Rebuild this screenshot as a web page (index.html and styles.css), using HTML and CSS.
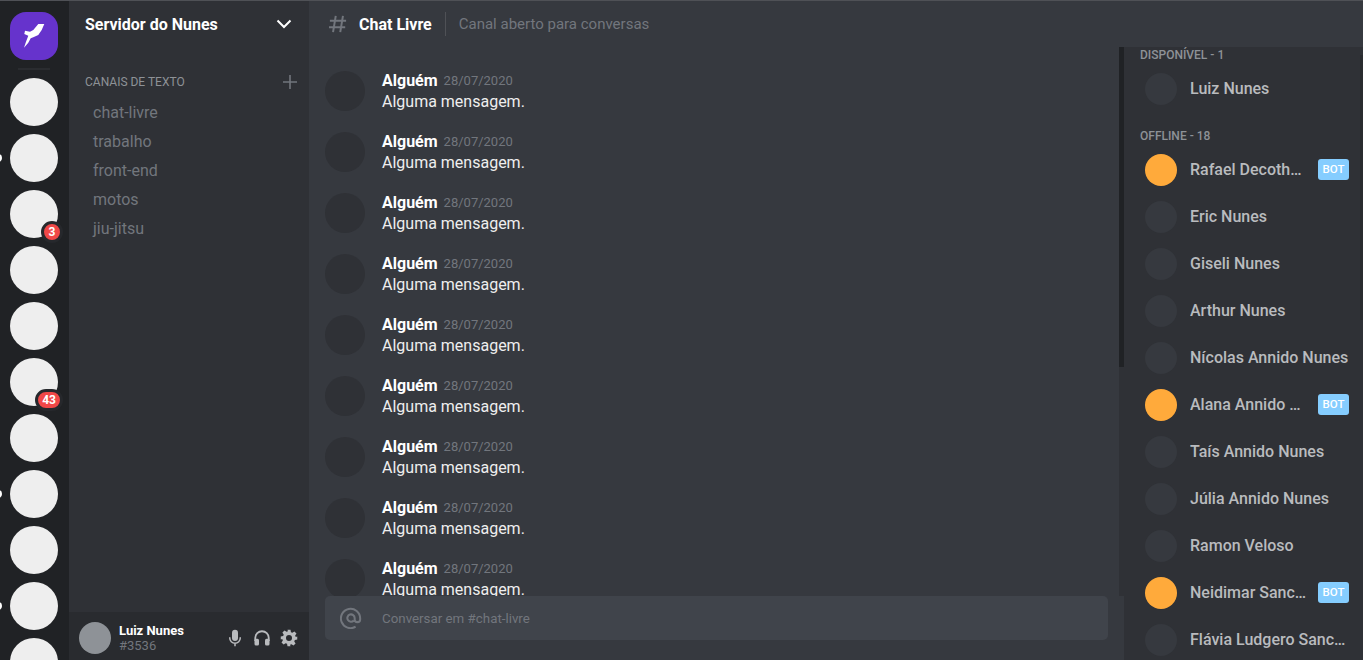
FILE: index.html
```html
<!DOCTYPE html>
<html lang="pt-BR">
<head>
    <meta charset="UTF-8">
    <title>Servidor do Nunes</title>
    <link rel="stylesheet" href="styles.css">
</head>
<body>
<div class="app">
    <!-- lista de servidores -->
    <nav class="servers">
        <div class="logo">
            <svg width="48" height="48" viewBox="0 0 48 48"><path fill="#fff" d="M34.300 12L28.300 12 23.300 18 20 19.700 15 18.700 14.300 22 18.300 23.700 16 29.700 14 35.700 18.300 30.700 20.700 26.300 23.300 25.300 28.300 23 31.700 18z"/></svg>
        </div>
        <div class="separator"></div>
        <div class="server"></div>
        <div class="server"><span class="pill"></span></div>
        <div class="server"><span class="badge">3</span></div>
        <div class="server"></div>
        <div class="server"></div>
        <div class="server"><span class="badge">43</span></div>
        <div class="server"></div>
        <div class="server"><span class="pill"></span></div>
        <div class="server"></div>
        <div class="server"><span class="pill"></span></div>
        <div class="server"></div>
    </nav>

    <!-- canais -->
    <aside class="channels">
        <header class="server-name">
            <h1>Servidor do Nunes</h1>
            <svg width="16" height="16" viewBox="0 0 16 16"><path fill="none" stroke="#fff" stroke-width="2" d="M1.500 4.500l6.500 6.500 6.500-6.500"/></svg>
        </header>
        <div class="channel-list">
            <div class="category">
                <span>Canais de texto</span>
                <svg width="14" height="14" viewBox="0 0 14 14"><path fill="none" stroke="#72767d" stroke-width="1.6" d="M7 0v14M0 7h14"/></svg>
            </div>
            <a class="channel">chat-livre</a>
            <a class="channel">trabalho</a>
            <a class="channel">front-end</a>
            <a class="channel">motos</a>
            <a class="channel">jiu-jitsu</a>
        </div>
        <footer class="user-bar">
            <div class="user-avatar"></div>
            <div class="user-info">
                <strong>Luiz Nunes</strong>
                <span>#3536</span>
            </div>
            <div class="user-icons">
                <svg width="18" height="18" viewBox="0 0 24 24"><path fill="#b9bbbe" d="M12 1a4 4 0 0 0-4 4v7a4 4 0 0 0 8 0V5a4 4 0 0 0-4-4z"/><path fill="none" stroke="#b9bbbe" stroke-width="2" d="M5 11v1a7 7 0 0 0 14 0v-1M12 19v4"/></svg>
                <svg width="18" height="18" viewBox="0 0 24 24"><path fill="none" stroke="#b9bbbe" stroke-width="2.400" d="M3 16v-4a9 9 0 0 1 18 0v4"/><rect x="2" y="13" width="6" height="9" rx="2" fill="#b9bbbe"/><rect x="16" y="13" width="6" height="9" rx="2" fill="#b9bbbe"/></svg>
                <svg width="18" height="18" viewBox="0 0 24 24"><path fill="#b9bbbe" fill-rule="evenodd" d="M10 1h4l.6 3.200 1.900.8 2.700-1.800 2.800 2.800-1.800 2.700.8 1.900L23 10v4l-3.200.6-.8 1.900 1.800 2.700-2.800 2.800-2.700-1.800-1.900.8L14 23h-4l-.6-3.200-1.900-.8-2.700 1.800-2.800-2.800 1.800-2.700-.8-1.900L1 14v-4l3.200-.6.8-1.900-1.800-2.700 2.800-2.800 2.700 1.800 1.900-.8zM12 8a4 4 0 1 0 0 8 4 4 0 0 0 0-8z"/></svg>
            </div>
        </footer>
    </aside>

    <div class="content">
        <header class="top-bar">
            <svg width="18" height="18" viewBox="0 0 20 20"><path fill="none" stroke="#72767d" stroke-width="2.200" d="M7.500 1L4.500 19M15.500 1l-3 18M1 6.500h18M0 13.500h18"/></svg>
            <h2>Chat Livre</h2>
            <p>Canal aberto para conversas</p>
        </header>
        <div class="body">
            <main class="chat">
                <div class="messages-row">
                    <div class="messages">
                        <div class="message"><div class="avatar"></div><div><div class="meta"><strong>Alguém</strong><time>28/07/2020</time></div><p>Alguma mensagem.</p></div></div>
                        <div class="message"><div class="avatar"></div><div><div class="meta"><strong>Alguém</strong><time>28/07/2020</time></div><p>Alguma mensagem.</p></div></div>
                        <div class="message"><div class="avatar"></div><div><div class="meta"><strong>Alguém</strong><time>28/07/2020</time></div><p>Alguma mensagem.</p></div></div>
                        <div class="message"><div class="avatar"></div><div><div class="meta"><strong>Alguém</strong><time>28/07/2020</time></div><p>Alguma mensagem.</p></div></div>
                        <div class="message"><div class="avatar"></div><div><div class="meta"><strong>Alguém</strong><time>28/07/2020</time></div><p>Alguma mensagem.</p></div></div>
                        <div class="message"><div class="avatar"></div><div><div class="meta"><strong>Alguém</strong><time>28/07/2020</time></div><p>Alguma mensagem.</p></div></div>
                        <div class="message"><div class="avatar"></div><div><div class="meta"><strong>Alguém</strong><time>28/07/2020</time></div><p>Alguma mensagem.</p></div></div>
                        <div class="message"><div class="avatar"></div><div><div class="meta"><strong>Alguém</strong><time>28/07/2020</time></div><p>Alguma mensagem.</p></div></div>
                        <div class="message"><div class="avatar"></div><div><div class="meta"><strong>Alguém</strong><time>28/07/2020</time></div><p>Alguma mensagem.</p></div></div>
                    </div>
                    <div class="scroll-track"><div class="scroll-thumb"></div></div>
                </div>
                <div class="input-row">
                    <div class="input-box">
                        <svg width="22" height="22" viewBox="0 0 24 24"><path fill="none" stroke="#72767d" stroke-width="2.200" d="M17 21.500a10.500 10.500 0 1 1 5-9v1a3 3 0 0 1-6 0V12a4 4 0 1 0-1 2.700"/></svg>
                        <span>Conversar em #chat-livre</span>
                    </div>
                </div>
            </main>
            <aside class="members">
                <div class="member-list">
                    <h3>Disponível - 1</h3>
                    <div class="member"><div class="member-avatar"></div><span class="member-name">Luiz Nunes</span></div>
                    <h3 class="offline">Offline - 18</h3>
                    <div class="member"><div class="member-avatar bot-avatar"></div><span class="member-name">Rafael Decotho Nunes</span><span class="bot">BOT</span></div>
                    <div class="member"><div class="member-avatar"></div><span class="member-name">Eric Nunes</span></div>
                    <div class="member"><div class="member-avatar"></div><span class="member-name">Giseli Nunes</span></div>
                    <div class="member"><div class="member-avatar"></div><span class="member-name">Arthur Nunes</span></div>
                    <div class="member"><div class="member-avatar"></div><span class="member-name">Nícolas Annido Nunes</span></div>
                    <div class="member"><div class="member-avatar bot-avatar"></div><span class="member-name">Alana Annido Nunes</span><span class="bot">BOT</span></div>
                    <div class="member"><div class="member-avatar"></div><span class="member-name">Taís Annido Nunes</span></div>
                    <div class="member"><div class="member-avatar"></div><span class="member-name">Júlia Annido Nunes</span></div>
                    <div class="member"><div class="member-avatar"></div><span class="member-name">Ramon Veloso</span></div>
                    <div class="member"><div class="member-avatar bot-avatar"></div><span class="member-name">Neidimar Sanches Nunes</span><span class="bot">BOT</span></div>
                    <div class="member"><div class="member-avatar"></div><span class="member-name">Flávia Ludgero Sanches Nunes</span></div>
                </div>
                <div class="member-thumb"></div>
            </aside>
        </div>
    </div>
</div>
</body>
</html>
```

FILE: styles.css
```css
/* base */
html, body {
    margin: 0;
    padding: 0;
    height: 100%;
    overflow: hidden;
    background: #36393f;
    font-family: Roboto, "Liberation Sans", sans-serif;
}
h1, h2, h3, p {
    margin: 0;
}
.app {
    display: flex;
    height: 100%;
    box-sizing: border-box;
    border-top: 1px solid #4f5156;
}

/* servidores */
.servers {
    width: 69px;
    flex: none;
    background: #202225;
    overflow: hidden;
    display: flex;
    flex-direction: column;
    align-items: center;
    padding: 11px 1px 0 0;
    gap: 8px;
    box-sizing: border-box;
}
.logo {
    width: 48px;
    height: 48px;
    flex: none;
    border-radius: 16px;
    background: #6633cc;
}
.logo svg {
    display: block;
}
.separator {
    width: 32px;
    height: 2px;
    flex: none;
    background: #2a2c30;
}
.server {
    width: 48px;
    height: 48px;
    flex: none;
    border-radius: 50%;
    background: #eeeeee;
    position: relative;
}
.pill {
    position: absolute;
    left: -16px;
    top: 20px;
    width: 8px;
    height: 8px;
    border-radius: 50%;
    background: #fff;
}
.badge {
    position: absolute;
    right: -5px;
    bottom: -5px;
    min-width: 22px;
    height: 22px;
    box-sizing: border-box;
    padding: 0 4px;
    border: 3px solid #26282c;
    border-radius: 11px;
    background: #f04747;
    color: #fff;
    font-size: 12px;
    font-weight: 700;
    line-height: 16px;
    text-align: center;
}

/* canais */
.channels {
    width: 240px;
    flex: none;
    background: #2f3136;
    display: flex;
    flex-direction: column;
}
.server-name {
    height: 46px;
    flex: none;
    display: flex;
    align-items: center;
    justify-content: space-between;
    padding: 0 17px 0 16px;
}
.server-name h1 {
    font-size: 16px;
    font-weight: 700;
    color: #fff;
}
.channel-list {
    flex: 1;
    padding: 26px 12px 0 16px;
}
.category {
    display: flex;
    align-items: center;
    justify-content: space-between;
    height: 18px;
    margin-bottom: 7px;
    color: #8e9297;
    font-size: 12px;
    text-transform: uppercase;
}
.channel {
    display: block;
    height: 29px;
    line-height: 29px;
    padding-left: 8px;
    color: #72767d;
    font-size: 16px;
}
.user-bar {
    height: 48px;
    flex: none;
    box-sizing: border-box;
    background: #292b2f;
    display: flex;
    align-items: center;
    padding: 4px 11px 0 10px;
}
.user-avatar {
    width: 32px;
    height: 32px;
    border-radius: 50%;
    background: #8e9297;
    flex: none;
}
.user-info {
    flex: 1;
    margin-left: 8px;
    display: flex;
    flex-direction: column;
    font-size: 13px;
    line-height: 15px;
    color: #fff;
}
.user-info strong {
    font-weight: 700;
}
.user-info span {
    color: #72767d;
}
.user-icons {
    display: flex;
    gap: 9px;
    align-items: center;
}

/* conteudo */
.content {
    flex: 1;
    min-width: 0;
    display: flex;
    flex-direction: column;
}
.top-bar {
    height: 46px;
    flex: none;
    display: flex;
    align-items: center;
    padding-left: 20px;
}
.top-bar h2 {
    margin-left: 12px;
    font-size: 16px;
    font-weight: 700;
    color: #fff;
}
.top-bar p {
    margin-left: 13px;
    padding-left: 13px;
    border-left: 1px solid #4f5156;
    height: 24px;
    line-height: 24px;
    font-size: 15px;
    color: #72767d;
}
.body {
    flex: 1;
    min-height: 0;
    display: flex;
}
.chat {
    flex: 1;
    min-width: 0;
    display: flex;
    flex-direction: column;
}
.messages-row {
    flex: 1;
    min-height: 0;
    display: flex;
}
.messages {
    flex: 1;
    overflow: hidden;
    padding: 24px 0 0 16px;
}
.message {
    display: flex;
    height: 61px;
}
.avatar {
    width: 40px;
    height: 40px;
    border-radius: 50%;
    background: #2f3136;
    margin-right: 17px;
    flex: none;
}
.meta {
    display: flex;
    align-items: center;
    line-height: 20px;
}
.meta strong {
    color: #fff;
    font-size: 16px;
    font-weight: 700;
}
.meta time {
    margin-left: 6px;
    color: #72767d;
    font-size: 13px;
}
.message p {
    margin-top: 1px;
    color: #eeeeee;
    font-size: 16px;
    line-height: 20px;
}
.scroll-track {
    width: 5px;
    flex: none;
    background: #2f3136;
}
.scroll-thumb {
    height: 320px;
    background: #202225;
}
.input-row {
    height: 64px;
    flex: none;
    padding: 0 16px;
}
.input-box {
    height: 44px;
    border-radius: 5px;
    background: #40444b;
    display: flex;
    align-items: center;
    padding-left: 15px;
    color: #72767d;
    font-size: 13.3333px;
}
.input-box span {
    margin-left: 20px;
}

/* membros */
.members {
    width: 239px;
    flex: none;
    overflow: hidden;
    background: #2f3136;
    display: flex;
}
.member-list {
    flex: 1;
    min-width: 0;
    padding: 1px 0 0 16px;
}
.member-thumb {
    width: 3px;
    height: 265px;
    margin-top: 8px;
    flex: none;
    background: #292b2f;
}
.members h3 {
    font-size: 12px;
    font-weight: 500;
    color: #8e9297;
    text-transform: uppercase;
    line-height: 14px;
    margin-bottom: 3px;
}
.members h3.offline {
    margin-top: 17px;
}
.member {
    height: 47px;
    display: flex;
    align-items: center;
    padding: 0 11px 0 5px;
}
.member-avatar {
    width: 32px;
    height: 32px;
    border-radius: 50%;
    background: #36393f;
    flex: none;
    margin-right: 13px;
}
.bot-avatar {
    background: #ffaa3b;
}
.member-name {
    flex: 1;
    min-width: 0;
    overflow: hidden;
    white-space: nowrap;
    text-overflow: ellipsis;
    color: #b9bbbe;
    font-size: 16px;
    font-weight: 500;
}
.bot {
    flex: none;
    width: 31px;
    height: 21px;
    margin-left: 9px;
    border-radius: 3px;
    background: #85cdff;
    color: #fff;
    font-size: 11.500px;
    font-weight: 500;
    line-height: 21px;
    text-align: center;
}
```
